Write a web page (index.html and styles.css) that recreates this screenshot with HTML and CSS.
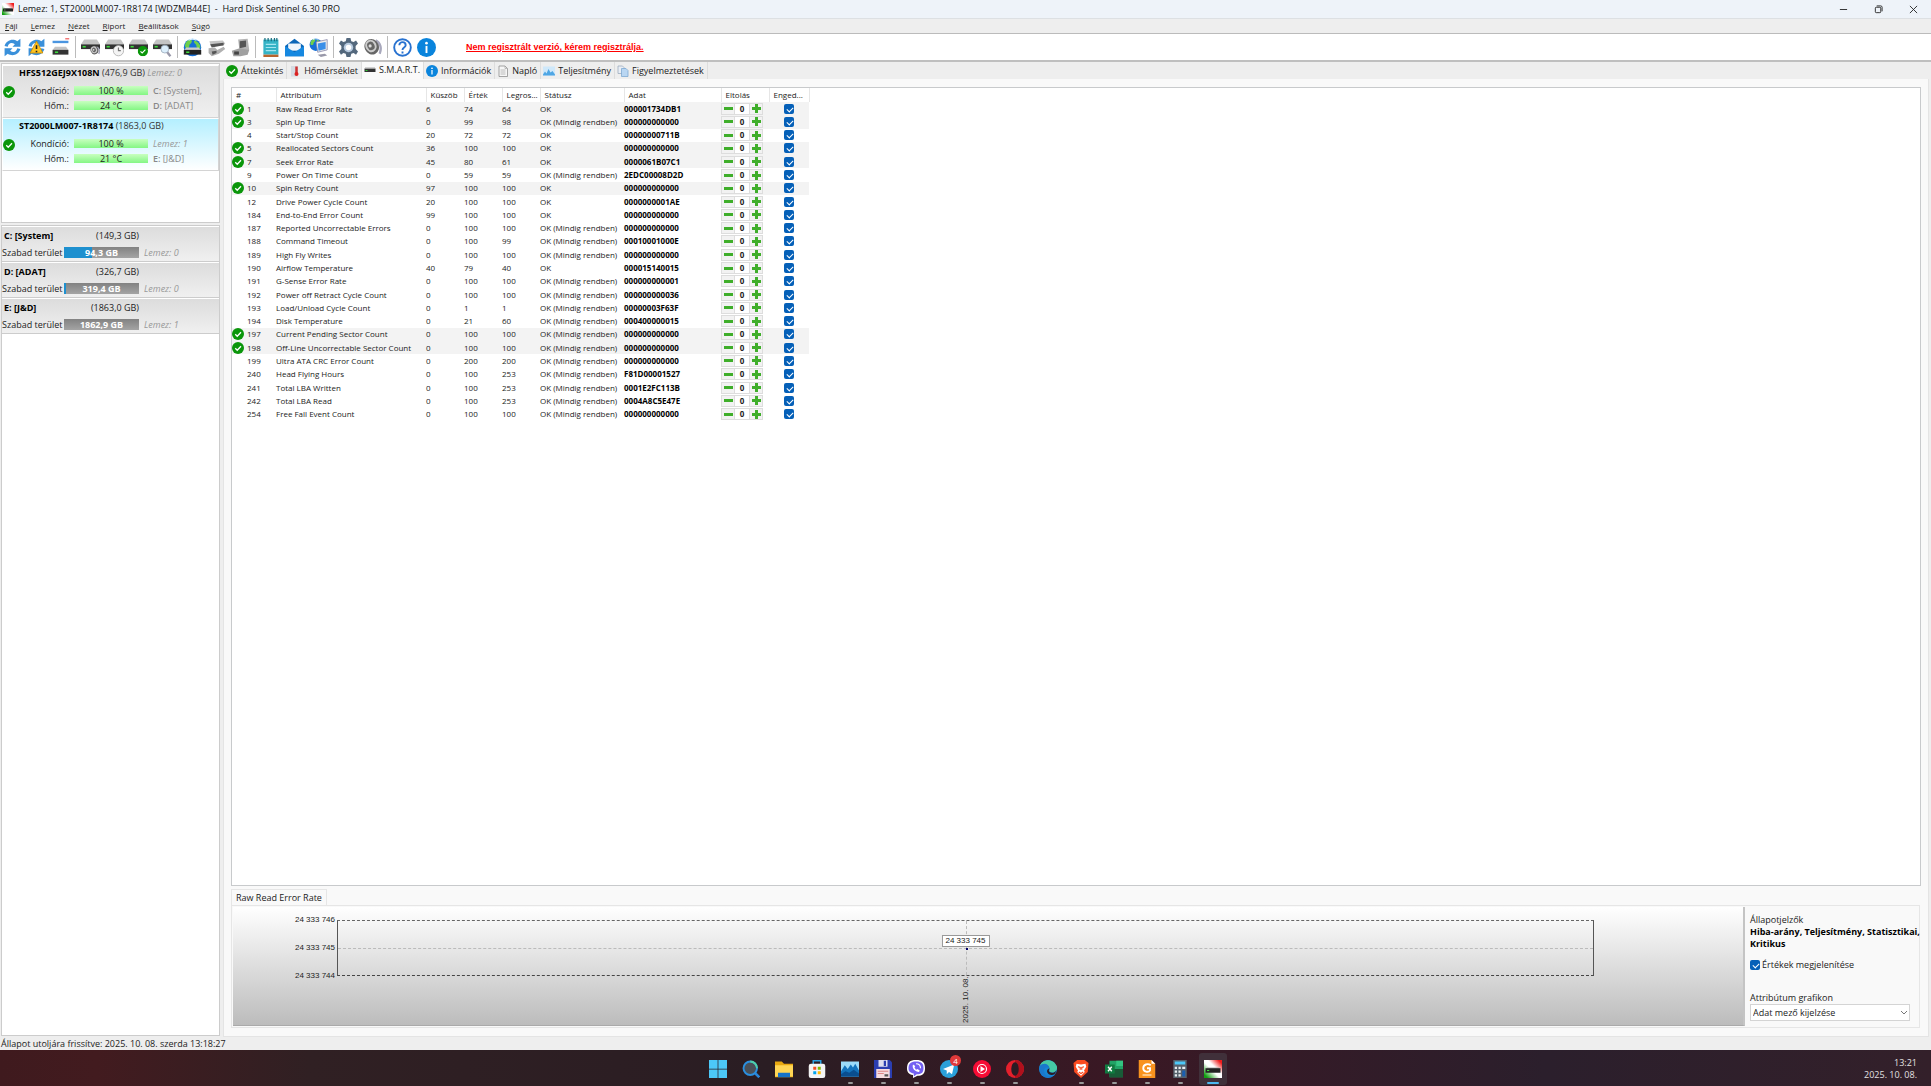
FILE: index.html
```html
<!DOCTYPE html>
<html lang="hu">
<head>
    <meta charset="UTF-8">
    <meta name="viewport" content="width=device-width, initial-scale=1.0">
    <title>Hard Disk Sentinel 6.30 PRO</title>
    <link rel="stylesheet" href="styles.css">
</head>
<body>
    <!-- shared icons -->
    <svg class="sprite" aria-hidden="true">
        <linearGradient id="flag" x1="0" y1="1" x2="1" y2="0"><stop offset="0.1" stop-color="#12a012"/><stop offset="0.45" stop-color="#fff"/><stop offset="0.6" stop-color="#fff"/><stop offset="0.9" stop-color="#f01c1c"/></linearGradient>
        <symbol id="ok" viewBox="0 0 24 24"><circle cx="12" cy="12" r="12" fill="#0a960a"/><path d="M6.500 12.500l4 4 7.500-8" fill="none" stroke="#fff" stroke-width="2.600"/></symbol>
        <symbol id="info" viewBox="0 0 24 24"><circle cx="12" cy="12" r="12" fill="#0a84dc"/><circle cx="12" cy="6.500" r="1.700" fill="#fff"/><path d="M12 10v9" stroke="#fff" stroke-width="2.400"/></symbol>
        <symbol id="drive" viewBox="0 0 24 24"><path d="M4 2h16l4 6H0z" fill="#c4c4c4"/><path d="M0 8h24v6H0z" fill="#333"/><path d="M2 11h4" stroke="#3ddc3d" stroke-width="2"/></symbol>
        <symbol id="refresh" viewBox="0 0 24 24"><path d="M2 10C4 3 12 0 18 4l4-3v10H12l3-3C11 5 7 6 6 11zM22 14c-2 7-10 10-16 6l-4 3V13h10l-3 3c4 3 8 2 9-3z" fill="#3a90da"/></symbol>
        <symbol id="globe" viewBox="0 0 24 24"><circle cx="12" cy="12" r="11" fill="#1670d8"/><path d="M5 4c4-4 7-2 6 1s-3 2-3 5-3 3-5 2c-1-3 0-6 2-8zM14 3c5 1 8 5 8 9-2 3-5 1-5-2s-4-3-3-7z" fill="#6fd04a"/><path d="M7 3c3-2 7-2 10 0" stroke="#d8f0ff" stroke-width="1.500" fill="none"/></symbol>
        <symbol id="speaker" viewBox="0 0 24 24"><path d="M16 3c6 3 8 10 5 17" fill="none" stroke="#a8a8bc" stroke-width="3"/><ellipse cx="11" cy="11" rx="9" ry="10" fill="#666" transform="rotate(-25 11 11)"/><ellipse cx="10" cy="10" rx="7" ry="8" fill="#ccc" transform="rotate(-25 10 10)"/><ellipse cx="10" cy="10" rx="4.500" ry="5.500" fill="#666" transform="rotate(-25 10 10)"/><circle cx="9" cy="10" r="2" fill="#ddd"/></symbol>
        <symbol id="wave" viewBox="0 0 24 24"><path d="M0 3h24v18H0z" fill="#cfe8fa"/><path d="M0 19l4-6 3 4 4-9 4 7 4-3 5 7v2H0z" fill="#4fa6e4"/></symbol>
        <symbol id="sentinel" viewBox="0 0 24 24"><path d="M0 0h24v24H0z" fill="url(#flag)"/><path d="M4 10h16l1 2H3z" fill="#aaa"/><path d="M2 11h20v6H2z" fill="#222"/><path d="M4 14h3" stroke="#3ddc3d" stroke-width="1.500"/></symbol>
    </svg>

    <header class="titlebar">
        <svg class="app-icon"><use href="#sentinel"/></svg>
        <h1>Lemez: 1, ST2000LM007-1R8174 [WDZMB44E] &nbsp;-&nbsp; Hard Disk Sentinel 6.30 PRO</h1>
        <div class="window-buttons">
            <button aria-label="Kis méret"><svg viewBox="0 0 10 10"><path d="M1 5h8"/></svg></button>
            <button aria-label="Előző méret"><svg viewBox="0 0 10 10"><rect x="1.500" y="2.500" width="6" height="6" rx="1"/><path d="M3 1h4.500a1.500 1.500 0 011.500 1.500V7"/></svg></button>
            <button aria-label="Bezárás"><svg viewBox="0 0 10 10"><path d="M1 1l8 8M9 1L1 9"/></svg></button>
        </div>
    </header>

    <nav class="menu">
        <a href="#"><u>F</u>ájl</a>
        <a href="#"><u>L</u>emez</a>
        <a href="#"><u>N</u>ézet</a>
        <a href="#"><u>R</u>iport</a>
        <a href="#"><u>B</u>eállítások</a>
        <a href="#"><u>S</u>úgó</a>
    </nav>

    <div class="toolbar">
        <button aria-label="Frissítés"><svg viewBox="0 0 24 24"><use href="#refresh"/></svg></button>
        <button aria-label="Teljes frissítés"><svg viewBox="0 0 24 24"><use href="#refresh"/><path d="M12 4l8 15H4z" fill="#ffc31f" stroke="#c98a00"/><path d="M12 9v5M12 16v2" stroke="#222" stroke-width="2"/></svg></button>
        <button aria-label="Lemez lista"><svg viewBox="0 0 24 24"><path d="M2 5h20" stroke="#4a95e0" stroke-width="3"/><path d="M18 1h5" stroke="#e55" stroke-width="1.500"/><path d="M5 11h14l3 4H2z" fill="#c4c4c4"/><path d="M2 15h20v6H2z" fill="#333"/><path d="M5 18h4" stroke="#3ddc3d" stroke-width="2"/></svg></button>
        <span class="separator"></span>
        <button aria-label="Akusztika"><svg viewBox="0 0 24 24"><use href="#drive"/><use href="#speaker" x="11" y="9" width="13" height="14"/></svg></button>
        <button aria-label="Ütemezett teszt"><svg viewBox="0 0 24 24"><use href="#drive"/><circle cx="17" cy="16" r="6.500" fill="#f4f4f4" stroke="#aaa"/><path d="M17 12v4h3" fill="none" stroke="#777" stroke-width="1.500"/></svg></button>
        <button aria-label="Lemez teszt"><svg viewBox="0 0 24 24"><use href="#drive"/><use href="#ok" x="11" y="10" width="13" height="13"/></svg></button>
        <button aria-label="Felület teszt"><svg viewBox="0 0 24 24"><use href="#drive"/><circle cx="15" cy="14" r="5" fill="#dceffc" stroke="#9ab"/><path d="M18 18l4 5" stroke="#99a" stroke-width="3"/></svg></button>
        <span class="separator"></span>
        <button aria-label="Hálózat"><svg viewBox="0 0 24 24"><use href="#globe"/><path d="M4 12h16l3 4H1z" fill="#ccc"/><path d="M1 15h22v6H1z" fill="#222"/><path d="M4 18h4" stroke="#3ddc3d" stroke-width="2"/></svg></button>
        <button aria-label="Leválasztás"><svg viewBox="0 0 24 24"><path d="M3 4l17-1 3 4-3 3H5z" fill="#c4c4c4"/><path d="M4 8l17-2v3L6 12z" fill="#555"/><path d="M2 13l8-1 3 3 8-4 2 3-8 6-9 3-4-4z" fill="#b0b0b0"/><path d="M6 17l6-1v3l-5 2z" fill="#555"/></svg></button>
        <button aria-label="Csatlakoztatás"><svg viewBox="0 0 24 24"><path d="M9 2l12-1 2 14-12 3z" fill="#b4b4b4"/><path d="M11 4l8-1v8l-8 2z" fill="#555"/><path d="M1 16l10-3 12 2-2 6-9 2H3z" fill="#a0a0a0"/><path d="M4 17h6v4H4z" fill="#444"/></svg></button>
        <span class="separator"></span>
        <button aria-label="Jelentés"><svg viewBox="0 0 24 24"><path d="M3 2h19v19H3z" fill="#35b3c6"/><path d="M5 0v4M9 0v4M13 0v4M17 0v4M20 0v4" stroke="#176b7c" stroke-width="1.500"/><path d="M6 8h13M6 12h13M6 16h13" stroke="#a5e5f0" stroke-width="1.500"/><path d="M3 21h19v3H3z" fill="#b8652e"/></svg></button>
        <button aria-label="E-mail"><svg viewBox="0 0 24 24"><path d="M0 10L12 1l12 9v13H0z" fill="#0c67b8"/><path d="M4 7h16v9H4z" fill="#eef6fc"/><path d="M0 10l12 8 12-8v13H0z" fill="#1688e0"/></svg></button>
        <button aria-label="Távoli állapot"><svg viewBox="0 0 24 24"><use href="#globe" width="17" height="17"/><path d="M9 5l14-3v13l-12 3z" fill="#eee" stroke="#88a"/><path d="M11 7l10-2v9l-9 2z" fill="#3b8fe8"/><path d="M11 21l9-1 3 2-8 2z" fill="#99a"/></svg></button>
        <span class="separator"></span>
        <button aria-label="Beállítások"><svg viewBox="0 0 24 24"><path d="M9.500 0h5l1 4 3 1 3-2 2.500 4-3 3v4l3 3-2.500 4-3-2-3 1-1 4h-5l-1-4-3-1-3 2L0 17l3-3v-4L0 7l2.500-4 3 2 3-1z" fill="#53687d"/><circle cx="12" cy="12" r="6" fill="#b8cbe0"/><circle cx="12" cy="12" r="3.500" fill="#fff"/></svg></button>
        <button aria-label="Hang"><svg viewBox="0 0 24 24"><use href="#speaker"/></svg></button>
        <span class="separator"></span>
        <button aria-label="Súgó"><svg viewBox="0 0 24 24"><circle cx="12" cy="12" r="10.500" fill="#fff" stroke="#2872d0" stroke-width="2.400"/><path d="M8 9c0-5 8-5 8 0 0 3-4 3-4 6M12 17v2.500" fill="none" stroke="#2872d0" stroke-width="2.400"/></svg></button>
        <button aria-label="Információ"><svg viewBox="0 0 24 24"><use href="#info"/></svg></button>
        <a class="register" href="#">Nem regisztrált verzió, kérem regisztrálja.</a>
    </div>

    <div class="workspace">
        <aside class="sidebar">
            <section class="disks">
                <article class="disk">
                    <h2>HFS512GEJ9X108N <span>(476,9 GB)</span> <em>Lemez: 0</em></h2>
                    <svg class="disk-status"><use href="#ok"/></svg>
                    <span class="label">Kondíció:</span><span class="green-bar">100 %</span><span class="drive"><b>C:</b> [System],</span>
                    <span class="label">Hőm.:</span><span class="green-bar">24 °C</span><span class="drive"><b>D:</b> [ADAT]</span>
                </article>
                <article class="disk selected">
                    <h2>ST2000LM007-1R8174 <span>(1863,0 GB)</span></h2>
                    <svg class="disk-status"><use href="#ok"/></svg>
                    <span class="label">Kondíció:</span><span class="green-bar">100 %</span><em class="drive">Lemez: 1</em>
                    <span class="label">Hőm.:</span><span class="green-bar">21 °C</span><span class="drive"><b>E:</b> [J&amp;D]</span>
                </article>
            </section>
            <section class="volumes">
                <article class="volume">
                    <h2>C: [System]</h2><span class="size">(149,3 GB)</span>
                    <span class="free">Szabad terület</span><span class="usage"><span class="used" style="width: 37%"></span><b>94,3 GB</b></span><em>Lemez: 0</em>
                </article>
                <article class="volume">
                    <h2>D: [ADAT]</h2><span class="size">(326,7 GB)</span>
                    <span class="free">Szabad terület</span><span class="usage"><span class="used" style="width: 2%"></span><b>319,4 GB</b></span><em>Lemez: 0</em>
                </article>
                <article class="volume">
                    <h2>E: [J&amp;D]</h2><span class="size">(1863,0 GB)</span>
                    <span class="free">Szabad terület</span><span class="usage"><span class="used" style="width: 0%"></span><b>1862,9 GB</b></span><em>Lemez: 1</em>
                </article>
            </section>
        </aside>

        <main class="content">
            <nav class="tabs">
                <a href="#"><svg><use href="#ok"/></svg>Áttekintés</a>
                <a href="#"><svg viewBox="0 0 24 24"><path d="M4 2h14v21H4z" fill="#d5dbe2"/><path d="M15 3v13" stroke="#c33" stroke-width="5"/><circle cx="15" cy="18" r="4" fill="#d22"/></svg>Hőmérséklet</a>
                <a href="#" class="active"><svg viewBox="0 0 24 24"><path d="M1 9h22v7H1z" fill="#333"/><path d="M2 8h20" stroke="#aaa" stroke-width="2"/><path d="M3 13h4" stroke="#3c3" stroke-width="2"/></svg>S.M.A.R.T.</a>
                <a href="#"><svg><use href="#info"/></svg>Információk</a>
                <a href="#"><svg viewBox="0 0 24 24"><path d="M4 2h12l5 5v16H4z" fill="#f6f6f6" stroke="#888" stroke-width="1.500"/><path d="M16 2v5h5M7 10h10M7 14h10M7 18h10" fill="none" stroke="#aaa" stroke-width="1.500"/></svg>Napló</a>
                <a href="#"><svg><use href="#wave"/></svg>Teljesítmény</a>
                <a href="#"><svg viewBox="0 0 24 24"><path d="M2 2h9l3 3v12H2z" fill="#e9eef5" stroke="#9ab" stroke-width="1.500"/><path d="M9 7h9l4 4v12H9z" fill="#b9d6f2" stroke="#7aa6d0" stroke-width="1.500"/></svg>Figyelmeztetések</a>
            </nav>

            <div class="page">
                <div class="smart-list">
                    <table>
                        <colgroup>
                            <col class="c-id"><col class="c-name"><col class="c-num"><col class="c-num"><col class="c-num">
                            <col class="c-status"><col class="c-data"><col class="c-offset"><col class="c-enabled">
                        </colgroup>
                        <thead>
                            <tr><th>#</th><th>Attribútum</th><th>Küszöb</th><th>Érték</th><th>Legros...</th><th>Státusz</th><th>Adat</th><th>Eltolás</th><th>Enged...</th></tr>
                        </thead>
                        <tbody id="attributes"></tbody>
                    </table>
                </div>

                <div class="detail-tab">Raw Read Error Rate</div>
                <div class="detail">
                    <figure class="chart">
                        <div class="y-axis"><span>24 333 746</span><span>24 333 745</span><span>24 333 744</span></div>
                        <div class="plot">
                            <span class="grid-x"></span>
                            <span class="grid-y"></span>
                            <span class="value">24 333 745</span>
                            <span class="point"></span>
                            <span class="date">2025. 10. 08.</span>
                        </div>
                    </figure>
                    <form class="options">
                        <p>Állapotjelzők</p>
                        <p class="indicators">Hiba-arány, Teljesítmény, Statisztikai,<br>Kritikus</p>
                        <label class="show-values"><input type="checkbox" checked>Értékek megjelenítése</label>
                        <label for="graph">Attribútum grafikon</label>
                        <div class="select">
                            <select id="graph"><option>Adat mező kijelzése</option></select>
                            <svg viewBox="0 0 8 8"><path d="M1 2l3 3 3-3"/></svg>
                        </div>
                    </form>
                </div>
            </div>
        </main>
    </div>

    <footer class="statusbar">Állapot utoljára frissítve: 2025. 10. 08. szerda 13:18:27</footer>

    <div class="taskbar">
        <nav class="apps">
            <button aria-label="Start"><svg viewBox="0 0 24 24"><path d="M0 0h11.500v11.500H0zM12.500 0H24v11.500H12.500zM0 12.500h11.500V24H0zM12.500 12.500H24V24H12.500z" fill="#4cc8f8"/></svg></button>
            <button aria-label="Keresés"><svg viewBox="0 0 24 24"><path d="M17 17l6 6" stroke="#2a86d8" stroke-width="3.500"/><circle cx="11" cy="11" r="9" fill="#4a5058" stroke="#2a8fe0" stroke-width="2.500"/><path d="M11 2a9 9 0 019 9" fill="none" stroke="#4fd0a8" stroke-width="2.500"/></svg></button>
            <button aria-label="Fájlkezelő"><svg viewBox="0 0 24 24"><path d="M0 2h9l3 3h12v18H0z" fill="#e8a810"/><path d="M0 7h24v15H0z" fill="#ffd655"/><path d="M4 17h16v6H4z" fill="#1673c8"/></svg></button>
            <button aria-label="Store"><svg viewBox="0 0 24 24"><path d="M7 6V1h10v5" fill="none" stroke="#2aa0e0" stroke-width="2"/><rect x="1" y="5" width="22" height="19" rx="3" fill="#f4f4f4"/><path d="M7 9h4v4H7z" fill="#f25022"/><path d="M13 9h4v4h-4z" fill="#7fba00"/><path d="M7 15h4v4H7z" fill="#00a4ef"/><path d="M13 15h4v4h-4z" fill="#ffb900"/></svg></button>
            <button class="running" aria-label="Teljesítményfigyelő"><svg viewBox="0 0 24 24"><path d="M0 2h24v20H0z" fill="#9cdcfa"/><path d="M0 15l5-8 4 5 4-6 3 4 3-5 5 9v8H0z" fill="#1474bd"/><path d="M0 19l6-4 5 2 6-4 7 5v4H0z" fill="#0a4e90"/></svg></button>
            <button class="running" aria-label="Total Commander"><svg viewBox="0 0 24 24"><path d="M0 0h21l3 3v21H0z" fill="#2b3eb0"/><path d="M6 0h12v9H6z" fill="#dde"/><path d="M13 1h3v7h-3z" fill="#2b3eb0"/><path d="M3 12h18v12H3z" fill="#f6dde0"/><path d="M5 15h14M5 18h8" stroke="#d88" stroke-width="1.500"/><path d="M14 19h5v3h-5z" fill="#555"/></svg></button>
            <button class="running" aria-label="Viber"><svg viewBox="0 0 24 24"><path d="M12 0c9 0 12 3 12 11s-4 10-10 10l-6 3v-4C2 19 0 16 0 11 0 3 4 0 12 0z" fill="#fff"/><path d="M12 2c8 0 10 3 10 9s-3 8-9 8l-4 3v-4c-5-1-7-3-7-7 0-6 3-9 10-9z" fill="#7360f2"/><path d="M8 6c-2 5 3 10 8 10l1-2-3-2-2 1-2-3 1-2z" fill="#fff"/><path d="M12 5c3 0 6 2 6 6" fill="none" stroke="#fff" stroke-width="1.500"/></svg></button>
            <button class="running" aria-label="Telegram"><svg viewBox="0 0 24 24"><circle cx="12" cy="12" r="12" fill="#2aa0da"/><path d="M4 12l15-6-3 13-4-3-3 3v-5z" fill="#fff"/></svg><span class="badge">4</span></button>
            <button class="running" aria-label="YouTube Music"><svg viewBox="0 0 24 24"><circle cx="12" cy="12" r="12" fill="#f60c35"/><circle cx="12" cy="12" r="6" fill="none" stroke="#fff" stroke-width="1.500"/><path d="M10 8l6 4-6 4z" fill="#fff"/></svg></button>
            <button class="running" aria-label="Opera"><svg viewBox="0 0 24 24"><circle cx="12" cy="12" r="12" fill="#e5202c"/><path d="M12 0a12 12 0 010 24z" fill="#b0101c"/><ellipse cx="12" cy="12" rx="5" ry="9" fill="#2a1c24"/></svg></button>
            <button aria-label="Edge"><svg viewBox="0 0 24 24"><circle cx="12" cy="12" r="12" fill="#1686d4"/><path d="M1 8C4-2 20-3 24 9c1 6-5 9-9 7-2-2 0-3-1-5-2-5-9-6-13-3z" fill="#45c8a4"/><path d="M1 8c5-5 12-3 13 3-4-3-8 0-7 5s6 7 12 5c-6 6-21 1-18-13z" fill="#1a78cc"/><path d="M14 11c0 2-2 3 0 5 3 2 7 1 9-2-1 4-3 6-6 6-6 0-9-7-3-9z" fill="#2c1c24"/></svg></button>
            <button class="running" aria-label="Brave"><svg viewBox="0 0 24 24"><path d="M7 0h10l5 4-1 12-9 8-9-8L2 4z" fill="#fb4b20"/><path d="M6 5l6 1 6-1 1 4-3 5 1 2-5 5-5-5 1-2-3-5z" fill="#fff"/><path d="M8 9l3 1v3M16 9l-3 1v3M9 16l3 2 3-2" fill="none" stroke="#fb4b20" stroke-width="1.500"/></svg></button>
            <button class="running" aria-label="Excel"><svg viewBox="0 0 24 24"><path d="M6 1h18v22H6z" fill="#21a366"/><path d="M15 1h9v7h-9z" fill="#33c481"/><path d="M6 12h18v11H6z" fill="#185c37"/><path d="M0 6h13v12H0z" fill="#107c41"/><path d="M4 9l5 6M9 9l-5 6" stroke="#fff" stroke-width="1.800"/></svg></button>
            <button class="running" aria-label="PDF"><svg viewBox="0 0 24 24"><path d="M1 0h17l5 5v19H1z" fill="#f8921e"/><path d="M18 0v5h5z" fill="#fff"/><path d="M17 7c-4-3-10-1-10 4s7 6 9 3v-3h-4" fill="none" stroke="#fff" stroke-width="2.500"/><path d="M6 20h12" stroke="#ffd9a8" stroke-width="2"/></svg></button>
            <button class="running" aria-label="Számológép"><svg viewBox="0 0 24 24"><path d="M3 0h18v24H3z" fill="#56616c"/><path d="M5 2h14v4H5z" fill="#4cc8f8"/><path d="M5 9h3v3H5zM10 9h3v3h-3zM15 9h4v3h-4zM5 14h3v3H5zM10 14h3v3h-3zM5 19h3v3H5zM10 19h3v3h-3z" fill="#e8ecf0"/><path d="M15 14h4v8h-4z" fill="#1b5fb0"/></svg></button>
            <button class="running current" aria-label="Hard Disk Sentinel"><svg><use href="#sentinel"/></svg></button>
        </nav>
        <div class="clock"><time>13:21</time><time>2025. 10. 08.</time></div>
    </div>

    <script src="script.js"></script>
</body>
</html>
```

FILE: styles.css
```css
* {
    margin: 0;
    padding: 0;
    box-sizing: border-box;
}

body {
    display: flex;
    flex-direction: column;
    min-height: 100vh;
    font-family: 'Open Sans', 'Noto Sans', sans-serif;
    font-size: 8px;
    line-height: 12px;
    color: #222;
    background: #eee;
}

button, input, select {
    font: inherit;
    color: inherit;
}

button {
    border: none;
    background: none;
}

a {
    color: inherit;
    text-decoration: none;
}

h1, h2 {
    font-size: inherit;
}

.sprite {
    position: absolute;
    width: 0;
    height: 0;
}

/* Title bar and menu */
.titlebar {
    display: flex;
    align-items: center;
    height: 18px;
    padding-left: 2px;
    background: #eef3f9;
}

.titlebar h1 {
    flex: 1;
    font-size: 9px;
    font-weight: normal;
    color: #111;
}

.app-icon {
    width: 12px;
    height: 12px;
    margin-right: 4px;
}

.window-buttons {
    display: flex;
}

.window-buttons button {
    display: flex;
    align-items: center;
    justify-content: center;
    width: 35px;
    height: 18px;
}

.window-buttons svg {
    width: 9px;
    height: 9px;
    fill: none;
    stroke: #222;
}

.menu {
    display: flex;
    gap: 13px;
    height: 16px;
    padding: 1px 5px;
    border-top: 1px solid #dde0e3;
    border-bottom: 1px solid #bbb;
}

/* Toolbar */
.toolbar {
    display: flex;
    align-items: center;
    height: 28px;
    background: #fff;
    border-bottom: 2px solid #bfbfbf;
}

.toolbar button {
    display: flex;
    align-items: center;
    justify-content: center;
    width: 24px;
    height: 22px;
}

.toolbar svg {
    width: 19px;
    height: 19px;
}

.separator {
    width: 1px;
    height: 22px;
    margin: 0 2px 0 3px;
    background: #bbb;
}

.register {
    margin-left: 28px;
    font-family: 'Liberation Sans', sans-serif;
    font-size: 9px;
    font-weight: bold;
    color: #f00;
    text-decoration: underline;
}

/* Left side */
.workspace {
    display: flex;
    flex: 1;
    gap: 3px;
}

.sidebar {
    display: flex;
    flex-direction: column;
    gap: 2px;
    width: 220px;
    padding: 1px 0 1px 1px;
    font-size: 9px;
}

.sidebar em {
    font-weight: normal;
    color: #999;
}

.disks, .volumes {
    background: #fff;
    border: 1px solid #ccc;
}

.disks {
    min-height: 160px;
    padding-top: 1px;
}

.volumes {
    flex: 1;
}

.disk {
    display: grid;
    grid-template-columns: 12px 49px 74px 1fr;
    grid-template-rows: 17px 15px 15px;
    column-gap: 5px;
    align-items: center;
    padding-bottom: 4px;
    background: linear-gradient(#dcdcdc, #f0f0f0);
    border: 1px solid #d4d4d4;
    border-left-color: #fff;
    border-top-color: #fff;
}

.disk.selected {
    background: linear-gradient(#b4efff, #fff);
}

.disk h2 {
    grid-column: 1 / -1;
    align-self: start;
    padding-left: 16px;
    line-height: 14px;
    color: #000;
}

.disk h2 span {
    font-weight: normal;
    color: #333;
}

.disk-status {
    grid-row: 2 / 4;
    width: 12px;
    height: 12px;
    margin-bottom: 12px;
}

.label {
    text-align: right;
}

.green-bar {
    height: 9px;
    line-height: 9px;
    text-align: center;
    background: linear-gradient(#c8ffc0, #84f684);
}

.drive {
    color: #888;
}

.drive b {
    font-weight: 600;
}

.volume {
    display: grid;
    grid-template-columns: 57px 75px 1fr;
    grid-template-rows: 17px 17px;
    column-gap: 5px;
    align-items: center;
    background: linear-gradient(#dcdcdc, #f0f0f0);
    border-top: 1px solid #fff;
    border-bottom: 1px solid #ccc;
}

.volume h2 {
    padding-left: 2px;
    white-space: nowrap;
    color: #000;
}

.size {
    text-align: right;
}

.free {
    grid-column: 1;
    white-space: nowrap;
}

.usage {
    display: grid;
    height: 11px;
    line-height: 11px;
    text-align: center;
    color: #fff;
    background: linear-gradient(#828282, #a4a4a4);
}

.used, .usage b {
    grid-area: 1 / 1;
}

.used {
    background: #1e90cf;
}

/* Right side */
.content {
    display: flex;
    flex: 1;
    flex-direction: column;
    min-width: 0;
    padding-right: 2px;
}

.tabs {
    display: flex;
    height: 17px;
    padding-left: 1px;
}

.tabs a {
    display: flex;
    align-items: center;
    gap: 3px;
    padding: 1px 3px 0 2px;
    font-size: 9px;
    border-right: 1px solid #ddd;
}

.tabs a.active {
    padding: 0 3px 1px 2px;
    background: #fafafa;
}

.tabs svg {
    width: 12px;
    height: 12px;
}

.page {
    display: flex;
    flex: 1;
    flex-direction: column;
    padding: 8px 7px 8px;
    background: #f9f9f9;
    border: 1px solid #e4e4e4;
    border-top: none;
}

.smart-list {
    flex: 1;
    background: #fff;
    border: 1px solid #c8cacc;
}

table {
    width: 577px;
    height: 333px;
    table-layout: fixed;
    border-collapse: collapse;
}

.c-id { width: 44px; }
.c-name { width: 150px; }
.c-num { width: 38px; }
.c-status { width: 84px; }
.c-data { width: 97px; }
.c-offset { width: 48px; }
.c-enabled { width: 40px; }

th, td {
    text-align: left;
    white-space: nowrap;
}

th {
    height: 14px;
    padding-left: 4px;
    font-weight: normal;
    border-right: 1px solid #e6e6e6;
}

tr.critical {
    background: #f3f3f3;
}

.id {
    display: flex;
    align-items: center;
    gap: 3px;
}

.id svg, .id i {
    width: 12px;
    height: 12px;
}

.data {
    font-weight: bold;
    color: #000;
}

.offset {
    display: grid;
    grid-template-columns: 12px 16px 12px;
    height: 12px;
    width: 42px;
    border: 1px solid #ddd;
    background: #fff;
    text-align: center;
    font-weight: bold;
}

.offset button {
    display: flex;
    align-items: center;
    justify-content: center;
    background: #f2f2f2;
}

.offset output {
    line-height: 10px;
    border-left: 1px solid #ddd;
    border-right: 1px solid #ddd;
}

.offset svg {
    width: 9px;
    height: 9px;
}

.enabled {
    text-align: center;
}

input[type="checkbox"] {
    appearance: none;
    display: block;
    width: 10px;
    height: 10px;
    border-radius: 2px;
    background: #0560b8;
}

input[type="checkbox"]::after {
    content: '';
    display: block;
    width: 5px;
    height: 3px;
    margin: 3px 0 0 3px;
    border-left: 1px solid #fff;
    border-bottom: 1px solid #fff;
    transform: rotate(-45deg);
}

td input[type="checkbox"] {
    margin: 0 auto;
}

/* Chart below the list */
.detail-tab {
    align-self: flex-start;
    margin-top: 3px;
    padding: 2px 4px 1px;
    font-size: 9px;
    border: 1px solid #e6e6e6;
    border-bottom: none;
}

.detail {
    display: flex;
    margin-right: 1px;
    padding: 1px;
    font-size: 9px;
    border: 1px solid #e6e6e6;
}

.chart {
    display: flex;
    flex: 1;
    gap: 2px;
    height: 119px;
    padding: 13px 149px 49px 0;
    background: linear-gradient(#fff, #bcbcbc);
    border-right: 2px solid #c4c4c4;
    border-bottom: 1px solid #aaa;
    font-family: 'Liberation Sans', sans-serif;
    font-size: 8px;
}

.y-axis {
    display: flex;
    flex-direction: column;
    justify-content: space-between;
    width: 102px;
    margin: -6px 0;
    text-align: right;
}

.plot {
    position: relative;
    flex: 1;
    border: 1px solid #555;
    border-top: 1px dashed #666;
    border-bottom: 1px dashed #444;
}

.grid-x, .grid-y, .value, .point, .date {
    position: absolute;
}

.grid-x {
    top: 50%;
    left: 0;
    right: 0;
    border-top: 1px dashed #bbb;
}

.grid-y {
    top: 0;
    bottom: 0;
    left: 50%;
    border-left: 1px dashed #bbb;
}

.value {
    bottom: 28px;
    left: 50%;
    padding: 0 3px;
    line-height: 10px;
    background: #fff;
    border: 1px solid #999;
    transform: translateX(-50%);
}

.point {
    top: 50%;
    left: 50%;
    width: 2px;
    height: 2px;
    background: #00006c;
}

.date {
    top: 100%;
    left: 50%;
    height: 48px;
    writing-mode: vertical-rl;
    transform: translateX(-50%) rotate(180deg);
}

.options {
    display: flex;
    flex-direction: column;
    width: 173px;
    padding: 7px 0 0 5px;
}

.indicators {
    font-weight: bold;
    white-space: nowrap;
    color: #000;
}

.show-values {
    display: flex;
    align-items: center;
    gap: 2px;
    margin: 9px 0 21px;
}

.select {
    display: grid;
    align-items: center;
    margin-right: 8px;
}

.select select, .select svg {
    grid-area: 1 / 1;
}

.select select {
    appearance: none;
    height: 17px;
    padding: 0 2px;
    background: #fff;
    border: 1px solid #d4d4d4;
    border-radius: 0;
}

.select svg {
    justify-self: end;
    width: 8px;
    height: 8px;
    margin-right: 2px;
    fill: none;
    stroke: #777;
    pointer-events: none;
}

.statusbar {
    height: 13px;
    padding: 1px 1px 0;
    font-size: 9px;
}

/* Windows taskbar */
.taskbar {
    display: grid;
    grid-template-columns: 1fr auto 1fr;
    align-items: center;
    height: 36px;
    padding-top: 1px;
    background: linear-gradient(90deg, #3f1a1e, #421b1f 5%, #302023 16%, #2a1d23 40%, #3a1824 58%, #2b1f2c 80%, #33202a);
}

.apps {
    grid-column: 2;
    display: flex;
    gap: 5px;
}

.apps button {
    position: relative;
    display: flex;
    align-items: center;
    justify-content: center;
    width: 28px;
    height: 32px;
    border-radius: 3px;
}

.apps svg {
    width: 18px;
    height: 18px;
}

.apps .running::after {
    content: '';
    position: absolute;
    bottom: 1px;
    width: 5px;
    height: 2px;
    border-radius: 1px;
    background: #999;
}

.apps .current {
    background: #40303a;
}

.apps .current::after {
    width: 12px;
    background: #4cb8f0;
}

.badge {
    position: absolute;
    top: 2px;
    right: 2px;
    width: 11px;
    height: 11px;
    line-height: 11px;
    border-radius: 50%;
    color: #fff;
    background: #e03a3a;
}

.clock {
    display: flex;
    flex-direction: column;
    padding-right: 14px;
    text-align: right;
    font-size: 9px;
    color: #e4e0e2;
}
```

FILE: script.js
```javascript
// id, name, threshold, value, worst, always ok, data, critical
const attributes = [
    [1, 'Raw Read Error Rate', 6, 74, 64, 0, '000001734DB1', 1],
    [3, 'Spin Up Time', 0, 99, 98, 1, '000000000000', 1],
    [4, 'Start/Stop Count', 20, 72, 72, 0, '00000000711B', 0],
    [5, 'Reallocated Sectors Count', 36, 100, 100, 0, '000000000000', 1],
    [7, 'Seek Error Rate', 45, 80, 61, 0, '0000061B07C1', 1],
    [9, 'Power On Time Count', 0, 59, 59, 1, '2EDC00008D2D', 0],
    [10, 'Spin Retry Count', 97, 100, 100, 0, '000000000000', 1],
    [12, 'Drive Power Cycle Count', 20, 100, 100, 0, '0000000001AE', 0],
    [184, 'End-to-End Error Count', 99, 100, 100, 0, '000000000000', 0],
    [187, 'Reported Uncorrectable Errors', 0, 100, 100, 1, '000000000000', 0],
    [188, 'Command Timeout', 0, 100, 99, 1, '00010001000E', 0],
    [189, 'High Fly Writes', 0, 100, 100, 1, '000000000000', 0],
    [190, 'Airflow Temperature', 40, 79, 40, 0, '000015140015', 0],
    [191, 'G-Sense Error Rate', 0, 100, 100, 1, '000000000001', 0],
    [192, 'Power off Retract Cycle Count', 0, 100, 100, 1, '000000000036', 0],
    [193, 'Load/Unload Cycle Count', 0, 1, 1, 1, '00000003F63F', 0],
    [194, 'Disk Temperature', 0, 21, 60, 1, '000400000015', 0],
    [197, 'Current Pending Sector Count', 0, 100, 100, 1, '000000000000', 1],
    [198, 'Off-Line Uncorrectable Sector Count', 0, 100, 100, 1, '000000000000', 1],
    [199, 'Ultra ATA CRC Error Count', 0, 200, 200, 1, '000000000000', 0],
    [240, 'Head Flying Hours', 0, 100, 253, 1, 'F81D00001527', 0],
    [241, 'Total LBA Written', 0, 100, 253, 1, '0001E2FC113B', 0],
    [242, 'Total LBA Read', 0, 100, 253, 1, '0004A8C5E47E', 0],
    [254, 'Free Fall Event Count', 0, 100, 100, 1, '000000000000', 0]
];

document.getElementById('attributes').innerHTML = attributes.map(
    ([id, name, threshold, value, worst, always, data, critical]) => `
    <tr class="${critical ? 'critical' : ''}">
        <td><div class="id">${critical ? '<svg><use href="#ok"/></svg>' : '<i></i>'}${id}</div></td>
        <td>${name}</td>
        <td>${threshold}</td>
        <td>${value}</td>
        <td>${worst}</td>
        <td>${always ? 'OK (Mindig rendben)' : 'OK'}</td>
        <td class="data">${data}</td>
        <td><div class="offset">
            <button aria-label="${name} csökkentés"><svg viewBox="0 0 9 9"><path d="M0 3h9v3H0z" fill="#3fae2a"/></svg></button>
            <output>0</output>
            <button aria-label="${name} növelés"><svg viewBox="0 0 9 9"><path d="M3 0h3v3h3v3H6v3H3V6H0V3h3z" fill="#3fae2a"/></svg></button>
        </div></td>
        <td class="enabled"><input type="checkbox" aria-label="${name} engedélyezve" checked></td>
    </tr>`
).join('');
```
